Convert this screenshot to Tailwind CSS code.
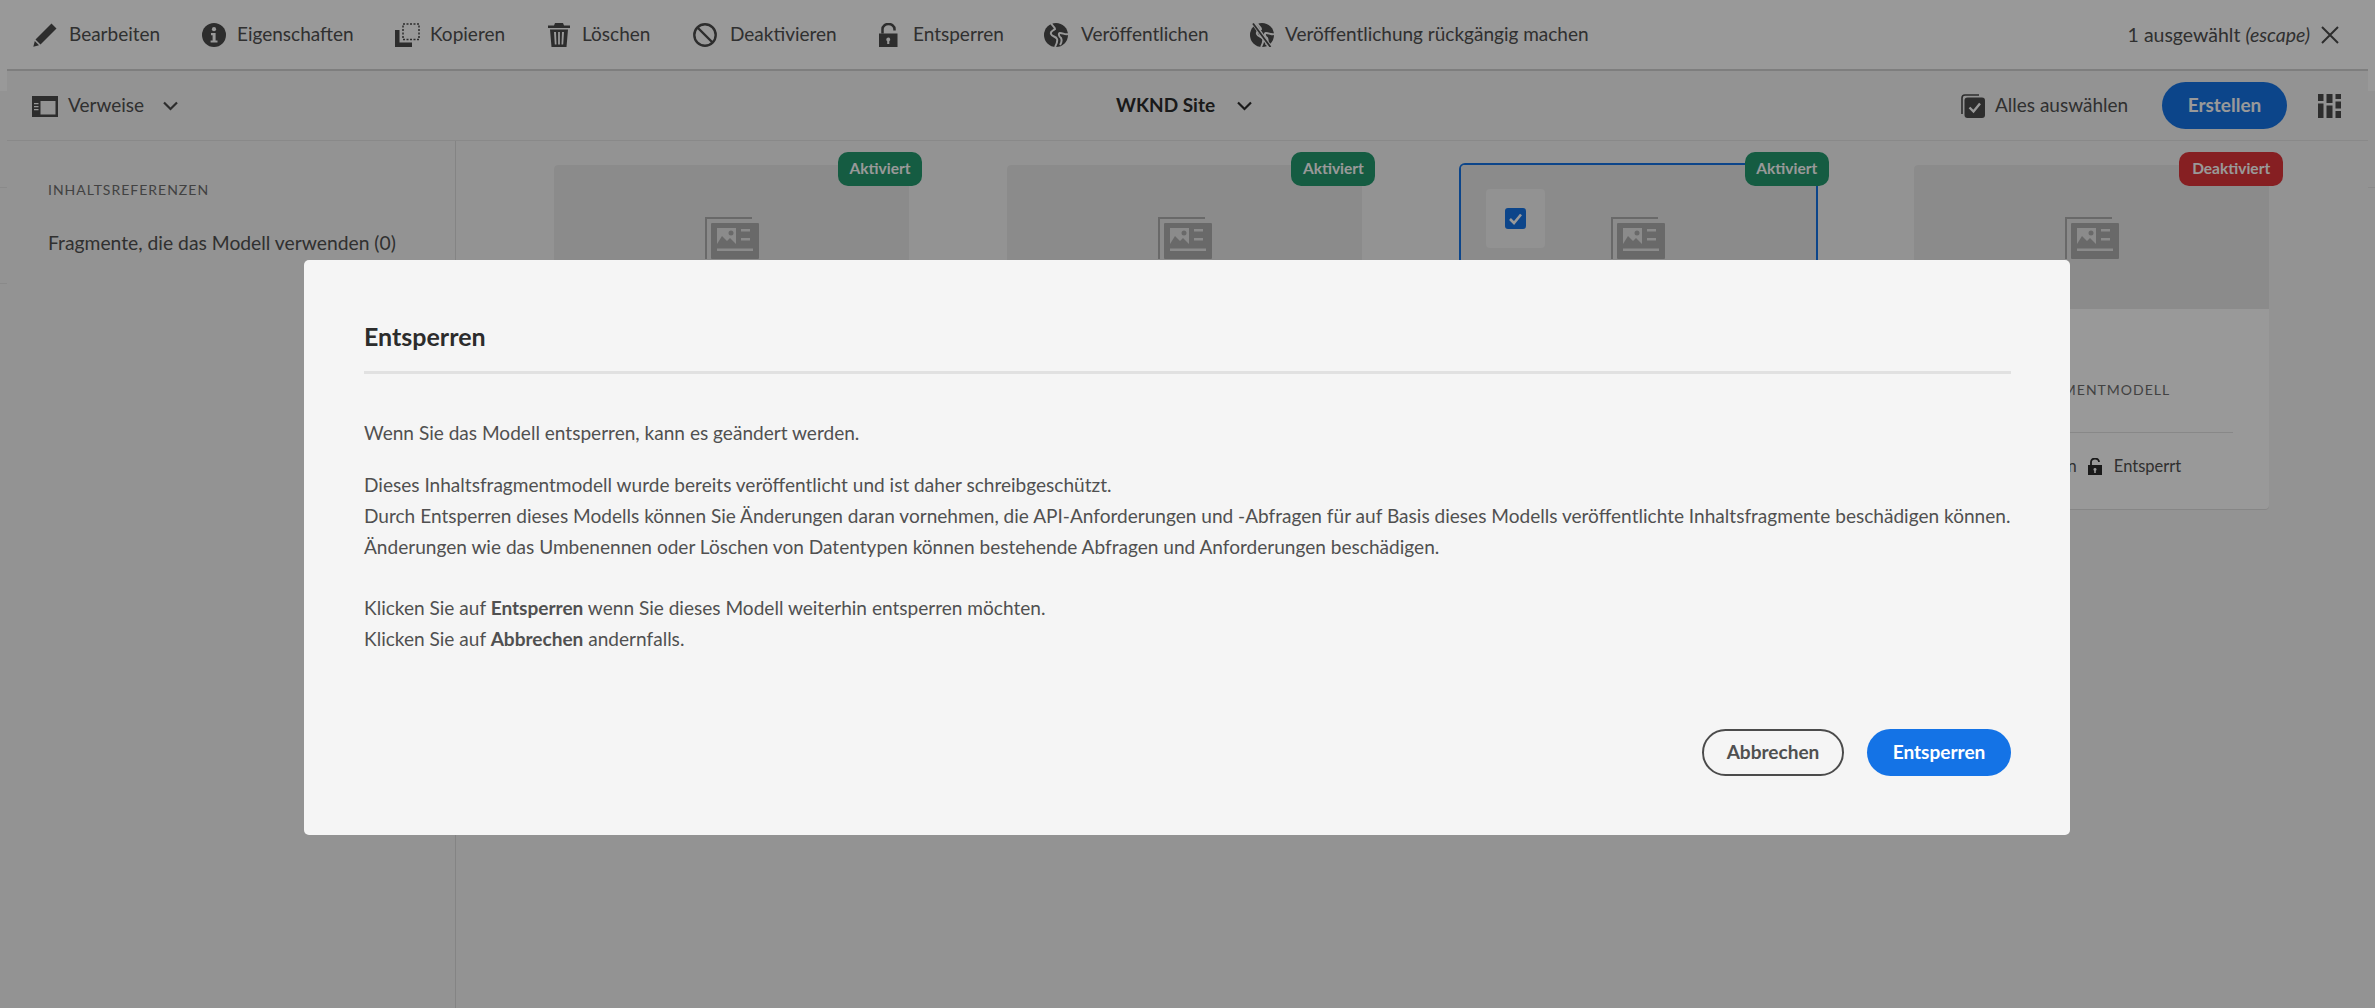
<!DOCTYPE html>
<html lang="de">
<head>
<meta charset="UTF-8">
<title>Inhaltsfragmentmodelle</title>
<script src="https://cdn.jsdelivr.net/npm/@tailwindcss/browser@4"></script>
</head>
<body class="h-screen overflow-hidden bg-[#f5f5f5] font-['Lato',sans-serif] text-[19px] text-[#505050]">

<!-- Aktionsleiste -->
<header class="flex h-[69px] items-center bg-white pl-[33px] pr-[36px]">
  <div class="flex items-center">
    <svg class="w-[24px] h-[24px] fill-[#4b4b4b]" viewBox="0 0 24 24"><path d="M18.5 0.5 L23.5 5.5 L7.5 21.5 L2.5 16.5 Z M1.8 18 L6 22.2 L0.3 23.8 Z"/></svg>
    <span class="ml-[12px] w-[91px] whitespace-nowrap">Bearbeiten</span>
  </div>
  <div class="ml-[42px] flex items-center">
    <svg class="w-[24px] h-[24px]" viewBox="0 0 24 24"><circle cx="12" cy="12" r="12" fill="#4b4b4b"/><circle cx="12" cy="6.2" r="2.1" fill="#fff"/><path d="M9 10h4.6v7.4H15.5v2.2H8.6v-2.2h2V12.200H9z" fill="#fff"/></svg>
    <span class="ml-[11px] w-[116px] whitespace-nowrap">Eigenschaften</span>
  </div>
  <div class="ml-[42px] flex items-center">
    <svg class="w-[25px] h-[24px]" viewBox="0 0 25 24"><path d="M0 7h4.500v12.500H17V24H0z" fill="#4b4b4b"/><rect x="8" y="1" width="16" height="15.500" fill="none" stroke="#4b4b4b" stroke-width="1.500" stroke-dasharray="2 1.500"/></svg>
    <span class="ml-[10px] w-[75px] whitespace-nowrap">Kopieren</span>
  </div>
  <div class="ml-[43px] flex items-center">
    <svg class="w-[22px] h-[24px] fill-[#4b4b4b]" viewBox="0 0 22 24"><path d="M7 0h8l1 2.500h6V5H0V2.500h6z"/><path fill-rule="evenodd" d="M2 6.500h18L18.500 24h-15zM6 9l.8 12.500h1.700L8 9zM10.100 9v12.500h1.800V9zM14 9l-.5 12.500h1.700L16 9z"/></svg>
    <span class="ml-[12px] w-[69px] whitespace-nowrap">Löschen</span>
  </div>
  <div class="ml-[42px] flex items-center">
    <svg class="w-[24px] h-[24px]" viewBox="0 0 24 24" fill="none" stroke="#4b4b4b" stroke-width="2.400"><circle cx="12" cy="12" r="10.700"/><path d="M4.500 4.500l15 15"/></svg>
    <span class="ml-[13px] w-[105px] whitespace-nowrap">Deaktivieren</span>
  </div>
  <div class="ml-[44px] flex items-center">
    <svg class="w-[19px] h-[24px]" viewBox="0 0 19 24"><path d="M3.500 10.500V6a6 5 0 0 1 12 0v1.500" fill="none" stroke="#4b4b4b" stroke-width="2.500"/><path fill-rule="evenodd" d="M0 10.500h18.500V24H0zM9.200 14.500a2 2 0 0 0-1 3.700V21h2.100v-2.800a2 2 0 0 0-1.100-3.700z" fill="#4b4b4b"/></svg>
    <span class="ml-[15px] w-[91px] whitespace-nowrap">Entsperren</span>
  </div>
  <div class="ml-[40px] flex items-center">
    <svg class="w-[24px] h-[24px]" viewBox="0 0 24 24"><circle cx="12" cy="12" r="12" fill="#4b4b4b"/><path d="M7 0C8 3 11 4 11 6C9 8 6 8 7 11C8 14 12 13 13 16C14 19 12 22 11 24M24 11C21 12 19 10 16 10C14 10 15 14 17 15C18 17 18 19 16 22" fill="none" stroke="#fff" stroke-width="2"/></svg>
    <span class="ml-[13px] w-[127px] whitespace-nowrap">Veröffentlichen</span>
  </div>
  <div class="ml-[42px] flex items-center">
    <svg class="w-[24px] h-[24px]" viewBox="0 0 24 24"><circle cx="12" cy="12" r="12" fill="#4b4b4b"/><path d="M7 0C8 3 11 4 11 6C9 8 6 8 7 11C8 14 12 13 13 16C14 19 12 22 11 24M24 11C21 12 19 10 16 10C14 10 15 14 17 15C18 17 18 19 16 22" fill="none" stroke="#fff" stroke-width="2"/><path d="M3.500 0L20 24" stroke="#fff" stroke-width="4"/><path d="M3 0.500L20.500 24" stroke="#4b4b4b" stroke-width="1.800"/></svg>
    <span class="ml-[11px] w-[306px] whitespace-nowrap">Veröffentlichung rückgängig machen</span>
  </div>
  <div class="ml-auto flex items-center">
    <span class="whitespace-nowrap text-[19.500px]">1 ausgewählt <em class="italic">(escape)</em></span>
    <svg class="ml-[11px] w-[18px] h-[18px]" viewBox="0 0 18 18" fill="none" stroke="#4b4b4b" stroke-width="2"><path d="M1 1l16 16M17 1L1 17"/></svg>
  </div>
</header>

<div class="flex h-[939px]">
  <!-- seitliche Streifen hinter der Seite -->
  <div class="w-[7px] shrink-0">
    <div class="h-[22px] bg-white"></div>
    <div class="mt-[96px] h-px bg-[#e6e6e6]"></div>
    <div class="mt-[95px] h-px bg-[#e6e6e6]"></div>
  </div>

  <div class="flex-1 flex flex-col min-w-0">
    <!-- Titelleiste -->
    <div class="relative flex h-[72px] items-center border-t-2 border-b border-t-[#d2d2d2] border-b-[#e4e4e4] pl-[25px] pr-[27px]">
      <svg class="w-[26px] h-[21px] mt-[1px]" viewBox="0 0 26 21"><path fill-rule="evenodd" d="M0 0h26v21H0zM8.500 5v13.500h15V5z" fill="#4b4b4b"/><path d="M2 7h4.500v1.300H2zM2 10h4.500v1.300H2zM2 13h4.500v1.300H2z" fill="#fff"/></svg>
      <span class="ml-[10px] w-[77px] whitespace-nowrap">Verweise</span>
      <svg class="ml-[18px] w-[15px] h-[10px]" viewBox="0 0 15 10" fill="none" stroke="#4b4b4b" stroke-width="2.200"><path d="M1 1.500l6.500 6.500L14 1.500"/></svg>

      <div class="absolute left-[1109px] top-0 h-full flex items-center">
        <span class="w-[101px] whitespace-nowrap font-bold text-[#2c2c2c]">WKND Site</span>
        <svg class="ml-[20px] w-[15px] h-[10px]" viewBox="0 0 15 10" fill="none" stroke="#2c2c2c" stroke-width="2.200"><path d="M1 1.500l6.500 6.500L14 1.500"/></svg>
      </div>

      <div class="ml-auto flex items-center">
        <svg class="w-[24px] h-[24px]" viewBox="0 0 24 24"><path d="M1 20V4a3 3 0 0 1 3-3h14" fill="none" stroke="#4b4b4b" stroke-width="1.600"/><rect x="3.500" y="3.500" width="20.500" height="20.500" rx="3" fill="#4b4b4b"/><path d="M8.500 13.500l4 4 6.500-8" fill="none" stroke="#fff" stroke-width="2.400"/></svg>
        <span class="ml-[10px] w-[135px] whitespace-nowrap">Alles auswählen</span>
        <button class="ml-[32px] h-[47px] w-[125px] rounded-full bg-[#1473e6] font-bold text-white">Erstellen</button>
        <svg class="ml-[31px] w-[23px] h-[24px] fill-[#4b4b4b]" viewBox="0 0 23 24"><path d="M0 0h5.500v7H0zM8.500 0h6v9h-6zM17.500 0H23v5h-5.500zM0 9.500h5.500V24H0zM17.500 7.500H23v7h-5.500zM8.500 11.500h6V24h-6zM17.500 17H23v7h-5.500z"/></svg>
      </div>
    </div>

    <div class="flex flex-1 min-h-0">
      <!-- Seitenleiste -->
      <aside class="w-[449px] shrink-0 border-r border-[#dcdcdc] pl-[41px] pt-[40px]">
        <div class="text-[14px] leading-[18px] tracking-[1px] text-[#6e6e6e] whitespace-nowrap">INHALTSREFERENZEN</div>
        <div class="mt-[31px] text-[19.300px] leading-[26px] whitespace-nowrap">Fragmente, die das Modell verwenden (0)</div>
      </aside>

      <!-- Karten -->
      <main class="flex items-start gap-[98.4px] pl-[98px] pt-[24px]">
        <article class="relative w-[355px] rounded-[4px] bg-white">
          <div class="flex h-[144px] justify-center rounded-t-[4px] bg-[#e8e8e8] pt-[52px]">
            <svg class="w-[54px] h-[42px]" viewBox="0 0 54 42"><path d="M1 42V1h46" fill="none" stroke="#b0b0b0" stroke-width="2"/><rect x="6" y="6" width="48" height="36" rx="1" fill="#b0b0b0"/><path d="M12 11h19v16H12z" fill="#e8e8e8"/><path d="M12 27l5-8 5 5 3-3 6 6z" fill="#b0b0b0"/><circle cx="26" cy="16" r="2.500" fill="#b0b0b0"/><path d="M36 12h9v2.500h-9zM36 21h9v2.500h-9zM12 31.500h36v2.500H12z" fill="#e8e8e8"/></svg>
          </div>
          <div class="h-[200px]"></div>
          <span class="absolute right-[-13px] top-[-13px] flex h-[34px] w-[84px] items-center justify-center rounded-[10px] bg-[#23996e] text-[15.5px] font-bold text-white">Aktiviert</span>
        </article>
        <article class="relative w-[355px] rounded-[4px] bg-white">
          <div class="flex h-[144px] justify-center rounded-t-[4px] bg-[#e8e8e8] pt-[52px]">
            <svg class="w-[54px] h-[42px]" viewBox="0 0 54 42"><path d="M1 42V1h46" fill="none" stroke="#b0b0b0" stroke-width="2"/><rect x="6" y="6" width="48" height="36" rx="1" fill="#b0b0b0"/><path d="M12 11h19v16H12z" fill="#e8e8e8"/><path d="M12 27l5-8 5 5 3-3 6 6z" fill="#b0b0b0"/><circle cx="26" cy="16" r="2.500" fill="#b0b0b0"/><path d="M36 12h9v2.500h-9zM36 21h9v2.500h-9zM12 31.500h36v2.500H12z" fill="#e8e8e8"/></svg>
          </div>
          <div class="h-[200px]"></div>
          <span class="absolute right-[-13px] top-[-13px] flex h-[34px] w-[84px] items-center justify-center rounded-[10px] bg-[#23996e] text-[15.5px] font-bold text-white">Aktiviert</span>
        </article>
        <article class="relative w-[355px] rounded-[4px] bg-white ring-2 ring-[#1473e6]">
          <div class="flex h-[144px] justify-center rounded-t-[4px] bg-[#e8e8e8] pt-[52px]">
            <svg class="w-[54px] h-[42px]" viewBox="0 0 54 42"><path d="M1 42V1h46" fill="none" stroke="#b0b0b0" stroke-width="2"/><rect x="6" y="6" width="48" height="36" rx="1" fill="#b0b0b0"/><path d="M12 11h19v16H12z" fill="#e8e8e8"/><path d="M12 27l5-8 5 5 3-3 6 6z" fill="#b0b0b0"/><circle cx="26" cy="16" r="2.500" fill="#b0b0b0"/><path d="M36 12h9v2.500h-9zM36 21h9v2.500h-9zM12 31.500h36v2.500H12z" fill="#e8e8e8"/></svg>
          </div>
          <div class="h-[200px]"></div>
          <span class="absolute left-[25px] top-[24px] flex h-[59px] w-[59px] items-center justify-center rounded-[4px] bg-[#f3f3f3]">
            <svg class="w-[21px] h-[21px]" viewBox="0 0 21 21"><rect width="21" height="21" rx="3" fill="#1473e6"/><path d="M5 11l4 4 7-8.500" fill="none" stroke="#fff" stroke-width="2.600"/></svg>
          </span>
          <span class="absolute right-[-13px] top-[-13px] flex h-[34px] w-[84px] items-center justify-center rounded-[10px] bg-[#23996e] text-[15.5px] font-bold text-white">Aktiviert</span>
        </article>
        <article class="relative w-[355px] rounded-[4px] bg-white shadow-[0_1px_0_#e0e0e0]">
          <div class="flex h-[144px] justify-center rounded-t-[4px] bg-[#e8e8e8] pt-[52px]">
            <svg class="w-[54px] h-[42px]" viewBox="0 0 54 42"><path d="M1 42V1h46" fill="none" stroke="#b0b0b0" stroke-width="2"/><rect x="6" y="6" width="48" height="36" rx="1" fill="#b0b0b0"/><path d="M12 11h19v16H12z" fill="#e8e8e8"/><path d="M12 27l5-8 5 5 3-3 6 6z" fill="#b0b0b0"/><circle cx="26" cy="16" r="2.500" fill="#b0b0b0"/><path d="M36 12h9v2.500h-9zM36 21h9v2.500h-9zM12 31.500h36v2.500H12z" fill="#e8e8e8"/></svg>
          </div>
          <div class="h-[200px] px-[36px] pt-[72px]">
            <div class="h-[18px] text-right text-[14px] leading-[18px] tracking-[1px] text-[#6e6e6e] whitespace-nowrap pr-[63px]">INHALTSFRAGMENTMODELL</div>
            <div class="mt-[33px] border-t border-[#e3e3e3]"></div>
            <div class="mt-[21px] mr-[52px] flex items-center justify-end text-[16.500px]">
              <span class="whitespace-nowrap">Aktion</span>
              <svg class="ml-[11px] w-[14px] h-[17px]" viewBox="0 0 14 17"><path d="M3 7V4a4 3.500 0 0 1 8 0" fill="none" stroke="#2c2c2c" stroke-width="1.800"/><path fill-rule="evenodd" d="M0 7h14v10H0zM7 10a1.500 1.500 0 0 0-.8 2.800V15h1.600v-2.200A1.500 1.500 0 0 0 7 10z" fill="#2c2c2c"/></svg>
              <span class="ml-[12px] whitespace-nowrap">Entsperrt</span>
            </div>
          </div>
          <span class="absolute right-[-14px] top-[-13px] flex h-[34px] w-[104px] items-center justify-center rounded-[10px] bg-[#df3439] text-[15.5px] font-bold text-white">Deaktiviert</span>
        </article>
      </main>
    </div>
  </div>

  <div class="w-[7px] shrink-0">
    <div class="h-[22px] bg-white"></div>
    <div class="mt-[96px] h-px bg-[#e6e6e6]"></div>
  </div>
</div>

<!-- Dialog -->
<div class="fixed inset-0 bg-black/40">
  <section class="absolute left-[304px] top-[260px] flex h-[575px] w-[1766px] flex-col rounded-[5px] bg-[#f5f5f5] pl-[60px] pr-[59px] pb-[59px] pt-[61px] text-[19.070px]">
    <h2 class="text-[25px] font-bold leading-[30px] text-[#2c2c2c]">Entsperren</h2>
    <div class="mt-[20px] h-[3px] bg-[#e1e1e1]"></div>
    <p class="mt-[43px] leading-[31px]">Wenn Sie das Modell entsperren, kann es geändert werden.</p>
    <p class="mt-[21px] leading-[31px]">Dieses Inhaltsfragmentmodell wurde bereits veröffentlicht und ist daher schreibgeschützt.<br>
    Durch Entsperren dieses Modells können Sie Änderungen daran vornehmen, die API-Anforderungen und -Abfragen für auf Basis dieses Modells veröffentlichte Inhaltsfragmente beschädigen können.<br>
    Änderungen wie das Umbenennen oder Löschen von Datentypen können bestehende Abfragen und Anforderungen beschädigen.</p>
    <p class="mt-[30px] leading-[31px]">Klicken Sie auf <b>Entsperren</b> wenn Sie dieses Modell weiterhin entsperren möchten.<br>
    Klicken Sie auf <b>Abbrechen</b> andernfalls.</p>
    <div class="mt-auto flex justify-end gap-[23px]">
      <button class="h-[47px] w-[142px] rounded-full border-2 border-[#4b4b4b] font-bold">Abbrechen</button>
      <button class="h-[47px] w-[144px] rounded-full bg-[#1473e6] font-bold text-white">Entsperren</button>
    </div>
  </section>
</div>
</body>
</html>
